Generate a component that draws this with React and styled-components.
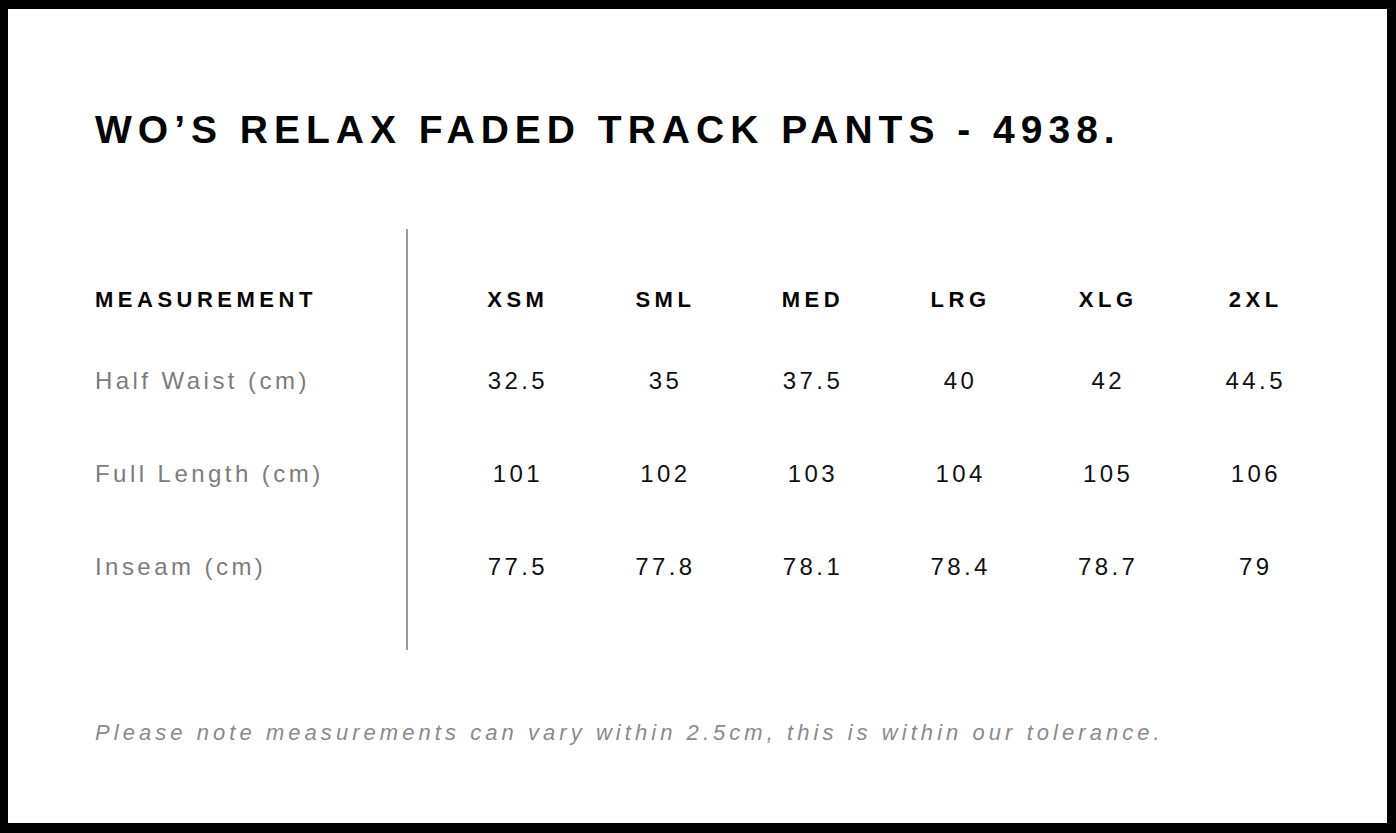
import React from "react";
import styled, { createGlobalStyle } from "styled-components";

const Global = createGlobalStyle`
  html, body { margin: 0; padding: 0; background: #fff; }
  body { font-family: "Liberation Sans", Arial, sans-serif; }
`;

const Frame = styled.div`
  width: 1396px;
  height: 833px;
  box-sizing: border-box;
  border-style: solid;
  border-color: #000;
  border-width: 9px 9px 10px 8px;
  background: #fff;
  padding: 101px 0 0 87px;
  display: flex;
  flex-direction: column;
  align-items: flex-start;
`;

const Title = styled.h1`
  margin: 0;
  font-family: "Liberation Sans", Arial, sans-serif;
  font-weight: 700;
  font-size: 39px;
  line-height: 39px;
  letter-spacing: 6px;
  color: #050505;
  white-space: nowrap;
`;

const Table = styled.div`
  margin-top: 80px;
  display: grid;
  grid-template-columns: 311px 36px repeat(6, 147.6px);
  grid-template-rows: 36.5px 69px 93px 93px 93px 36.5px;
`;

const Divider = styled.div`
  grid-column: 2;
  grid-row: 1 / -1;
  border-left: 2px solid #9a9a9a;
`;

const Cell = styled.div`
  grid-column: ${(p) => p.$col};
  grid-row: ${(p) => p.$row};
  display: flex;
  align-items: center;
  justify-content: ${(p) => (p.$center ? "center" : "flex-start")};
  padding-left: ${(p) => (p.$center ? "4px" : "0")};
  white-space: nowrap;
  font-family: "Liberation Sans", Arial, sans-serif;
  line-height: 1;
`;

const HeadText = styled.span`
  font-weight: 700;
  font-size: 22px;
  letter-spacing: 4.5px;
  color: #050505;
`;

const LabelText = styled.span`
  font-size: 24px;
  letter-spacing: 3.45px;
  color: #7c7c7c;
`;

const ValueText = styled.span`
  font-size: 24px;
  letter-spacing: 3.4px;
  color: #111;
`;

const Note = styled.p`
  margin: 72px 0 0;
  font-family: "Liberation Sans", Arial, sans-serif;
  font-style: italic;
  font-size: 22px;
  line-height: 22px;
  letter-spacing: 4.05px;
  color: #8a8a8a;
  white-space: nowrap;
`;

const sizes = ["XSM", "SML", "MED", "LRG", "XLG", "2XL"];
const rows = [
  { label: "Half Waist (cm)", values: ["32.5", "35", "37.5", "40", "42", "44.5"] },
  { label: "Full Length (cm)", values: ["101", "102", "103", "104", "105", "106"] },
  { label: "Inseam (cm)", values: ["77.5", "77.8", "78.1", "78.4", "78.7", "79"] },
];

export default function App() {
  return (
    <>
      <Global />
      <Frame>
        <Title>WO’S RELAX FADED TRACK PANTS - 4938.</Title>
        <Table>
          <Divider />
          <Cell $col={1} $row={2}>
            <HeadText>MEASUREMENT</HeadText>
          </Cell>
          {sizes.map((s, i) => (
            <Cell key={s} $col={i + 3} $row={2} $center>
              <HeadText>{s}</HeadText>
            </Cell>
          ))}
          {rows.map((r, ri) => (
            <React.Fragment key={r.label}>
              <Cell $col={1} $row={ri + 3}>
                <LabelText>{r.label}</LabelText>
              </Cell>
              {r.values.map((v, vi) => (
                <Cell key={vi} $col={vi + 3} $row={ri + 3} $center>
                  <ValueText>{v}</ValueText>
                </Cell>
              ))}
            </React.Fragment>
          ))}
        </Table>
        <Note>
          Please note measurements can vary within 2.5cm, this is within our tolerance.
        </Note>
      </Frame>
    </>
  );
}
